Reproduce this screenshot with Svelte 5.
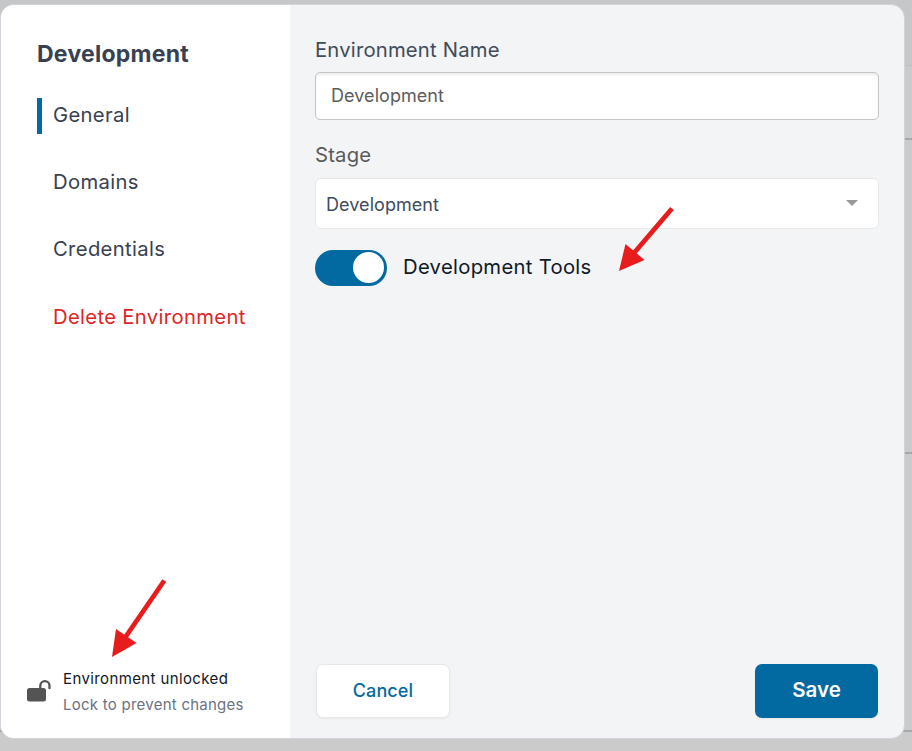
<script>
  let active = $state('General');
  let name = $state('Development');
  let tools = $state(true);
  const sections = ['General', 'Domains', 'Credentials', 'Delete Environment'];
</script>

<div class="page">
  <div class="backdrop">
    <div class="band"></div>
    <div class="block first"></div>
    <div class="block second"></div>
    <div class="block third"></div>
  </div>
  <div class="modal">
    <aside>
      <h2><span>Development</span></h2>
      <nav>
        {#each sections as section}
          <button
            class="item"
            class:active={active === section}
            class:danger={section === 'Delete Environment'}
            onclick={() => (active = section)}><span>{section}</span></button>
        {/each}
      </nav>
      <div class="lock">
        <svg width="24" height="22" viewBox="0 0 24 22">
          <rect x="0" y="8" width="19" height="13.5" rx="2.5" fill="#545454" />
          <path d="M13.3 9V5.8a4.6 4.6 0 0 1 9.2 0v2.4" fill="none" stroke="#545454" stroke-width="2.3" stroke-linecap="round" />
        </svg>
        <div class="locktext">
          <div class="status"><span>Environment unlocked</span></div>
          <div class="hint"><span>Lock to prevent changes</span></div>
        </div>
      </div>
    </aside>
    <main>
      <label class="lbl" for="env"><span>Environment Name</span></label>
      <input id="env" bind:value={name} />
      <div class="lbl stage"><span>Stage</span></div>
      <div class="select">
        <span>Development</span>
        <svg width="12" height="6" viewBox="0 0 12 6"><path d="M0 0h12L6 6z" fill="#999" /></svg>
      </div>
      <div class="togglerow">
        <button class="toggle" class:on={tools} aria-label="Development Tools" onclick={() => (tools = !tools)}><i></i></button>
        <span>Development Tools</span>
      </div>
      <footer>
        <button class="cancel"><span>Cancel</span></button>
        <button class="save"><span>Save</span></button>
      </footer>
    </main>
  </div>
  <svg class="arrows" width="912" height="751" viewBox="0 0 912 751">
    <g stroke="#e81c1c" stroke-width="4.8" fill="#e81c1c">
      <path d="M672 208.500L634 253" />
      <path d="M619 271L625.500 244L644.500 260z" stroke="none" />
      <path d="M164.300 580.500L125.500 637" />
      <path d="M112 657L116 629L136.500 643z" stroke="none" />
    </g>
  </svg>
</div>

<style>
  :global(body) { margin: 0; }
  .page {
    position: relative; width: 912px; height: 751px; overflow: hidden;
    box-sizing: border-box; padding-top: 4px; background: #cbcbcb;
    font-family: Inter, "Liberation Sans", sans-serif; font-optical-sizing: none;
  }
  .page * { box-sizing: border-box; }
  .backdrop { position: absolute; inset: 0; display: flex; flex-direction: column; }
  .band { height: 66px; background: #c6c7c9; border-bottom: 1px solid #bfc0c1; }
  .block { border-bottom: 2px solid #a5a8ac; }
  .first { height: 74px; }
  .second { height: 314px; }
  .third { height: 278px; }
  .modal {
    position: relative; display: flex; width: 905px; height: 735px;
    border: 1px solid #d1d4db; border-radius: 14px; overflow: hidden; background: #f3f4f6;
  }
  aside { width: 289px; background: #fff; display: flex; flex-direction: column; padding: 34px 0 20px; }
  h2 { margin: 0 0 0 36px; font-size: 23px; letter-spacing: .25px; line-height: 30px; font-weight: 650; color: #374151; white-space: nowrap; }
  nav { display: flex; flex-direction: column; gap: 31.200px; margin: 29px 0 0 36px; }
  button { font: inherit; font-optical-sizing: none; margin: 0; padding: 0; border: 0; background: none; cursor: pointer; }
  .item {
    height: 36px; text-align: left; padding-left: 11px; border-left: 5px solid transparent;
    font-size: 20.250px; letter-spacing: .33px; line-height: 34px; padding-bottom: 2px; color: #374151; white-space: nowrap;
  }
  .active { border-left-color: #0369a1; }
  .danger { color: #dc2626; }
  .lock { margin: auto 0 0 26px; display: flex; align-items: center; gap: 12px; }
  .lock svg { margin-top: -3px; }
  .locktext { white-space: nowrap; font-size: 15px; line-height: 26px; }
  .status { color: #111827; letter-spacing: .38px; }
  .hint { color: #6b7280; letter-spacing: .25px; }
  main { flex: 1; padding: 30px 25px 20px; display: flex; flex-direction: column; }
  .lbl { display: block; font-size: 20.250px; letter-spacing: .2px; line-height: 30px; color: #414b5a; white-space: nowrap; }
  input {
    display: block; width: 564px; height: 48px; margin: 7px 0 0; padding: 0 15px 1px;
    font: 18px Inter, sans-serif; font-optical-sizing: none; letter-spacing: .06px; color: #5c5c5c; border: 1px solid #c4c5c7; border-radius: 5px;
    background: #fff; outline: none; box-shadow: inset 0 2px 2px rgba(0, 0, 0, .07);
  }
  .stage { margin-top: 20px; color: #5a5a5a; }
  .select {
    width: 564px; height: 51px; margin-top: 8px; padding: 0 20px 0 10px; background: #fff;
    border: 1px solid #e6e7e9; border-radius: 6px; display: flex; align-items: center;
    justify-content: space-between; font-size: 18px; color: #3d4c60;
  }
  .select span { padding-top: 2px; letter-spacing: .06px; }
  .select svg { margin-top: -2px; }
  .togglerow { display: flex; align-items: center; gap: 16px; margin-top: 21px; color: #111827; font-size: 20.250px; letter-spacing: .3px; line-height: 34px; white-space: nowrap; }
  .togglerow > span { margin-top: -2px; }
  .toggle { width: 72px; height: 36px; border-radius: 18px; background: #94a3b8; padding: 2px; display: flex; }
  .toggle.on { background: #0369a1; justify-content: flex-end; }
  .toggle i { width: 31px; height: 31px; border-radius: 50%; background: #fff; margin-right: 1px; }
  footer { margin-top: auto; display: flex; justify-content: space-between; width: 563px; }
  .cancel {
    width: 134px; height: 54px; border: 1px solid #e5e7eb; border-radius: 7px; background: #fff;
    margin-left: 1px; color: #0369a1; font-size: 18px; font-weight: 450; letter-spacing: .1px; padding-bottom: 1px; box-shadow: 0 1px 2px rgba(0, 0, 0, .05);
  }
  .save {
    width: 123px; height: 54px; border-radius: 7px; background: #0369a1; color: #fff;
    font-size: 20.500px; font-weight: 600; padding-bottom: 3px; box-shadow: 0 1px 2px rgba(0, 0, 0, .05);
  }
  .arrows { position: absolute; left: 0; top: 0; pointer-events: none; }
</style>
